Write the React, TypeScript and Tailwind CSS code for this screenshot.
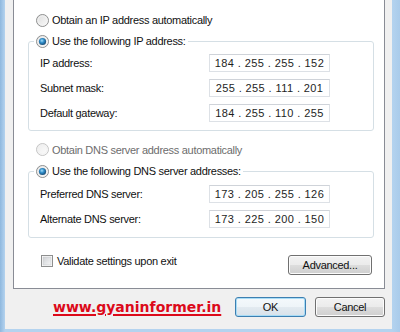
import React from "react";

function Radio({ checked = false, disabled = false }: { checked?: boolean; disabled?: boolean }) {
  return (
    <svg width="13" height="13" viewBox="0 0 13 13" className="shrink-0 block">
      <defs>
        <linearGradient id="rbg" x1="0" y1="0" x2="1" y2="1">
          <stop offset="0" stopColor="#dcdcdc" />
          <stop offset="1" stopColor="#fbfbfb" />
        </linearGradient>
        <linearGradient id="rbgd" x1="0" y1="0" x2="1" y2="1">
          <stop offset="0" stopColor="#ececec" />
          <stop offset="1" stopColor="#fdfdfd" />
        </linearGradient>
        <radialGradient id="rdot" cx="0.42" cy="0.38" r="0.65">
          <stop offset="0" stopColor="#a6defa" />
          <stop offset="0.45" stopColor="#2f8dc9" />
          <stop offset="1" stopColor="#18476f" />
        </radialGradient>
      </defs>
      <circle
        cx="6.5"
        cy="6.5"
        r="6"
        fill={disabled ? "url(#rbgd)" : "url(#rbg)"}
        stroke={disabled ? "#c4c4c4" : "#8e8f8f"}
      />
      <circle cx="6.5" cy="6.5" r="4.6" fill="none" stroke={disabled ? "#f0f0f0" : "#f4f4f4"} strokeWidth="0.8" />
      {checked && <circle cx="6.5" cy="6.5" r="3.6" fill="url(#rdot)" />}
    </svg>
  );
}

function Checkbox() {
  return (
    <svg width="12" height="12" viewBox="0 0 12 12" className="shrink-0 block">
      <defs>
        <linearGradient id="cbg" x1="0" y1="0" x2="1" y2="1">
          <stop offset="0" stopColor="#cfd1d4" />
          <stop offset="1" stopColor="#f5f6f7" />
        </linearGradient>
      </defs>
      <rect x="0.5" y="0.5" width="11" height="11" fill="#ffffff" stroke="#8e8f8f" />
      <rect x="2" y="2" width="8" height="8" fill="url(#cbg)" stroke="#c6c8cb" strokeWidth="0.6" />
    </svg>
  );
}

function IpBox({ parts }: { parts: string[] }) {
  return (
    <div className="w-[121px] h-[18px] border border-[#dde1e6] border-t-[#cfd3d9] bg-white flex items-center justify-center text-[#1e1e1e] tracking-[0.4px]">
      {parts.join(" . ")}
    </div>
  );
}

function Row({ label, parts }: { label: string; parts: string[] }) {
  return (
    <div className="h-[18px] flex items-center justify-between">
      <span>{label}</span>
      <IpBox parts={parts} />
    </div>
  );
}

function Button({ children, def = false, w }: { children: React.ReactNode; def?: boolean; w: string }) {
  return (
    <div
      className={
        "h-[20px] rounded-[3px] border flex items-center justify-center " +
        w +
        " " +
        (def
          ? "border-[#3c7fb1] bg-[linear-gradient(#f4f9fc_0%,#eef4f8_50%,#e2eaf0_51%,#d8e2ea_100%)] shadow-[inset_0_0_0_1px_#a8dcf6]"
          : "border-[#707070] bg-[linear-gradient(#f2f2f2_0%,#ebebeb_50%,#dddddd_51%,#cfcfcf_100%)] shadow-[inset_0_0_0_1px_#fcfcfc]")
      }
    >
      {children}
    </div>
  );
}

export default function App() {
  return (
    <div className="w-[400px] h-[332px] flex flex-col overflow-hidden bg-[linear-gradient(90deg,#8fb8de_0px,#b4d3ef_5px,#b4d3ef_392px,#a9cbea_400px)] pl-[5px] pr-[8px] pb-[3px] font-['Liberation_Sans',Arial,sans-serif] text-[11px] leading-[14px] tracking-[-0.3px] text-[#111]">
      <div className="flex-1 bg-[#f0f0f0] pl-[8px] pr-[7px] flex flex-col">
        <div className="h-[289px] bg-white border-x border-b border-[#898c95] flex flex-col">
          <div className="pt-[13px] pl-[22px] flex items-center gap-[3px] h-[27px]">
            <Radio />
            <span>Obtain an IP address automatically</span>
          </div>

          <fieldset className="ml-[14px] mr-[10px] mt-[7px] border border-[#d5dfe5] rounded-[3px] p-0 min-w-0">
            <legend className="ml-[5px] px-[2px]">
              <span className="flex items-center gap-[3px] h-[14px]">
                <Radio checked />
                <span>Use the following IP address:</span>
              </span>
            </legend>
            <div className="pt-[6px] pb-[8px] pl-[11px] pr-[43px] flex flex-col gap-[7px]">
              <Row label="IP address:" parts={["184", "255", "255", "152"]} />
              <Row label="Subnet mask:" parts={["255", "255", "111", "201"]} />
              <Row label="Default gateway:" parts={["184", "255", "110", "255"]} />
            </div>
          </fieldset>

          <div className="mt-[12px] pl-[22px] flex items-center gap-[3px] h-[13px] text-[#6d6d6d]">
            <Radio disabled />
            <span>Obtain DNS server address automatically</span>
          </div>

          <fieldset className="ml-[14px] mr-[10px] mt-[8px] border border-[#d5dfe5] rounded-[3px] p-0 min-w-0">
            <legend className="ml-[5px] px-[2px]">
              <span className="flex items-center gap-[3px] h-[14px]">
                <Radio checked />
                <span>Use the following DNS server addresses:</span>
              </span>
            </legend>
            <div className="pt-[7px] pb-[9px] pl-[11px] pr-[43px] flex flex-col gap-[7px]">
              <Row label="Preferred DNS server:" parts={["173", "205", "255", "126"]} />
              <Row label="Alternate DNS server:" parts={["173", "225", "200", "150"]} />
            </div>
          </fieldset>

          <div className="mt-[17px] ml-[27px] mr-[12px] flex items-start justify-between">
            <div className="flex items-center gap-[4px] h-[12px]">
              <Checkbox />
              <span>Validate settings upon exit</span>
            </div>
            <Button w="w-[84px] h-[19px]">Advanced...</Button>
          </div>
        </div>

        <div className="pt-[8px] flex items-start">
          <span className="ml-[40px] mt-[1px] font-['DejaVu_Sans',sans-serif] font-bold text-[14px] leading-[18px] tracking-normal text-[#dc0a1a] underline decoration-[1.5px] underline-offset-[2px]">
            www.gyaninformer.in
          </span>
          <div className="ml-auto flex gap-[9px]">
            <Button def w="w-[71px]">OK</Button>
            <Button w="w-[70px]">Cancel</Button>
          </div>
        </div>
      </div>
    </div>
  );
}
